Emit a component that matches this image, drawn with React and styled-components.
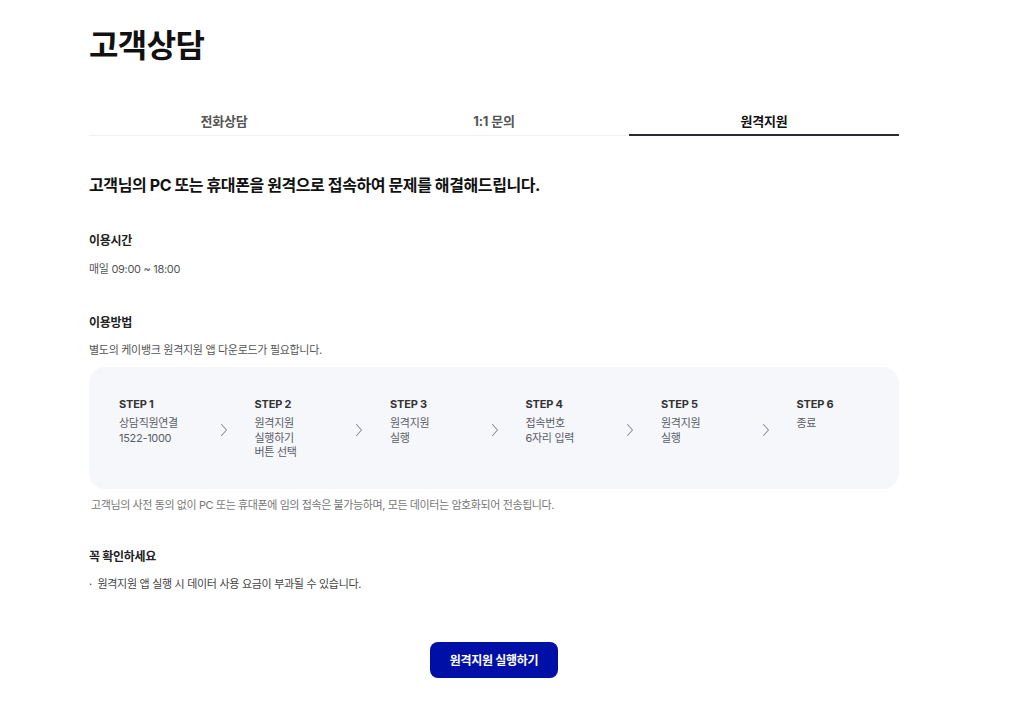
import React from "react";
import styled, { createGlobalStyle } from "styled-components";

const Global = createGlobalStyle`
  * { box-sizing: border-box; }
  body {
    margin: 0;
    background: #fff;
    font-family: "Inter", "Noto Sans CJK KR", sans-serif;
    color: #222;
  }
`;

const Page = styled.div`
  width: 810px;
  margin-left: 89px;
  padding-top: 25px;
  padding-bottom: 37px;
`;

const Title = styled.h1`
  margin: 0;
  font-size: 32px;
  line-height: 42px;
  font-weight: 700;
  color: #111;
  letter-spacing: -0.6px;
`;

const TabBar = styled.div`
  margin-top: 33px;
  display: grid;
  grid-template-columns: repeat(3, 1fr);
  border-bottom: 1px solid #f0f0f2;
`;

const Tab = styled.div`
  text-align: center;
  padding: 12px 0 4px;
  font-size: 13px;
  line-height: 18px;
  font-weight: 700;
  letter-spacing: -0.2px;
  color: ${(p) => (p.$active ? "#111" : "#555")};
  border-bottom: 2px solid ${(p) => (p.$active ? "#2a2b33" : "transparent")};
  margin-bottom: -1px;
`;

const Headline = styled.h2`
  margin: 37px 0 0;
  font-size: 16px;
  line-height: 24px;
  font-weight: 700;
  color: #111;
  letter-spacing: -0.4px;
`;

const SectionTitle = styled.h3`
  margin: ${(p) => p.$mt}px 0 0;
  font-size: 12px;
  line-height: 18px;
  font-weight: 700;
  color: #222;
  letter-spacing: -0.3px;
`;

const Text = styled.p`
  margin: ${(p) => p.$mt}px 0 0;
  font-size: 11px;
  line-height: 18px;
  color: #555;
  letter-spacing: -0.3px;
`;

const StepBox = styled.div`
  margin-top: 8px;
  background: #f6f7fb;
  border-radius: 16px;
  padding: 29px 30px 29px;
  display: flex;
`;

const Step = styled.div`
  width: ${(p) => (p.$last ? "auto" : "135.5px")};
  flex: ${(p) => (p.$last ? 1 : "none")};
  display: flex;
  align-items: flex-start;
`;

const StepBody = styled.div`
  flex: 1;
`;

const StepLabel = styled.div`
  font-size: 11px;
  line-height: 16px;
  font-weight: 700;
  color: #333;
  margin-bottom: 4px;
  letter-spacing: -0.2px;
`;

const StepLine = styled.div`
  font-size: 11px;
  line-height: 14.5px;
  color: #5a5d66;
  letter-spacing: -0.3px;
`;

const Chevron = styled.svg`
  width: 8px;
  height: 14px;
  margin-top: 27px;
  margin-right: 27px;
  flex: none;
`;

const Note = styled.p`
  margin: 8px 0 0 2px;
  font-size: 11px;
  line-height: 16px;
  color: #777;
  letter-spacing: -0.4px;
`;

const Bullet = styled.p`
  margin: 10px 0 0;
  font-size: 11px;
  line-height: 16px;
  color: #444;
  letter-spacing: -0.3px;
`;

const ButtonRow = styled.div`
  margin-top: 50px;
  display: flex;
  justify-content: center;
`;

const Button = styled.button`
  width: 128px;
  height: 36px;
  border: 0;
  border-radius: 8px;
  background: #0010a6;
  color: #fff;
  font-family: inherit;
  font-size: 12px;
  font-weight: 700;
  letter-spacing: -0.3px;
  cursor: pointer;
`;

const steps = [
  ["상담직원연결", "1522-1000"],
  ["원격지원", "실행하기", "버튼 선택"],
  ["원격지원", "실행"],
  ["접속번호", "6자리 입력"],
  ["원격지원", "실행"],
  ["종료"],
];

export default function App() {
  return (
    <>
      <Global />
      <Page>
        <Title>고객상담</Title>
        <TabBar>
          <Tab>전화상담</Tab>
          <Tab>1:1 문의</Tab>
          <Tab $active>원격지원</Tab>
        </TabBar>
        <Headline>고객님의 PC 또는 휴대폰을 원격으로 접속하여 문제를 해결해드립니다.</Headline>

        <SectionTitle $mt={35}>이용시간</SectionTitle>
        <Text $mt={10}>매일 09:00 ~ 18:00</Text>

        <SectionTitle $mt={36}>이용방법</SectionTitle>
        <Text $mt={9}>별도의 케이뱅크 원격지원 앱 다운로드가 필요합니다.</Text>

        <StepBox>
          {steps.map((lines, i) => {
            const last = i === steps.length - 1;
            return (
              <Step key={i} $last={last}>
                <StepBody>
                  <StepLabel>STEP {i + 1}</StepLabel>
                  {lines.map((l) => (
                    <StepLine key={l}>{l}</StepLine>
                  ))}
                </StepBody>
                {!last && (
                  <Chevron viewBox="0 0 8 14" fill="none">
                    <path d="M1.5 1.5 L6.5 7 L1.5 12.5" stroke="#8a8d96" strokeWidth="1.1" strokeLinecap="round" strokeLinejoin="round" />
                  </Chevron>
                )}
              </Step>
            );
          })}
        </StepBox>
        <Note>고객님의 사전 동의 없이 PC 또는 휴대폰에 임의 접속은 불가능하며, 모든 데이터는 암호화되어 전송됩니다.</Note>

        <SectionTitle $mt={35}>꼭 확인하세요</SectionTitle>
        <Bullet>· &nbsp;원격지원 앱 실행 시 데이터 사용 요금이 부과될 수 있습니다.</Bullet>

        <ButtonRow>
          <Button>원격지원 실행하기</Button>
        </ButtonRow>
      </Page>
    </>
  );
}
